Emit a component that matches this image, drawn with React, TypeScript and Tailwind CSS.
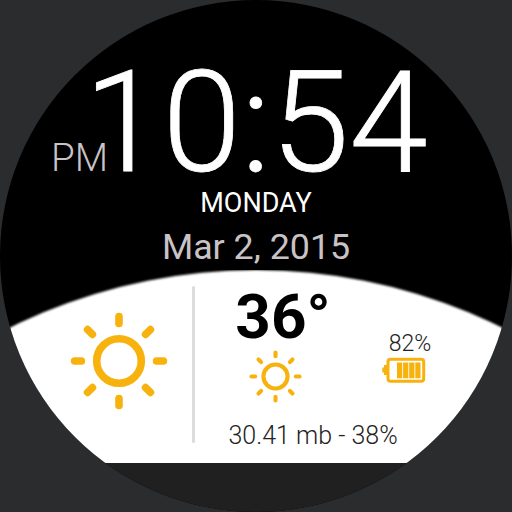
import type { ReactNode } from "react";

const watch = {
  time: "10:54",
  period: "PM",
  day: "MONDAY",
  date: "Mar 2, 2015",
  temperature: "36°",
  battery: "82%",
  conditions: "30.41 mb - 38%",
};

const RAYS = [0, 45, 90, 135, 180, 225, 270, 315];

function SunIcon({ className }: { className?: string }) {
  return (
    <svg
      className={className}
      viewBox="0 0 98 98"
      fill="none"
      stroke="#f7b20e"
      strokeWidth={7.6}
      strokeLinecap="round"
    >
      <circle cx="49" cy="49" r="22.3" />
      {RAYS.map((angle) => (
        <path
          key={angle}
          d="M49 4.6V11.4"
          transform={`rotate(${angle} 49 49)`}
        />
      ))}
    </svg>
  );
}

function BatteryIcon({ className }: { className?: string }) {
  return (
    <svg className={className} viewBox="0 0 44 26">
      <path d="M5 8H2V10.5H0.3V15.5H2V18H5Z" fill="#f7b20e" />
      <rect
        x="6"
        y="2.2"
        width="35.7"
        height="22"
        rx="2.5"
        fill="none"
        stroke="#f7b20e"
        strokeWidth={3}
      />
      {[15, 21.1, 27.2, 33.3].map((x) => (
        <rect key={x} x={x} y="5.5" width="5.2" height="15.8" fill="#f7b20e" />
      ))}
    </svg>
  );
}

function Line({ className, children }: { className: string; children: ReactNode }) {
  return <div className={`whitespace-nowrap ${className}`}>{children}</div>;
}

export default function App() {
  return (
    <div className="h-[512px] w-[512px] bg-[#2b2c2e] font-['Roboto',sans-serif]">
      <div className="flex h-full w-full flex-col overflow-hidden rounded-full bg-black">
        {/* TIME */}
        <div className="h-[270px] shrink-0 pt-[51px]">
          <div className="flex h-36 items-baseline pl-[51px] leading-[144px]">
            <Line className="w-[33px] text-[38.5px] font-light text-[#c9c3c5]">
              {watch.period}
            </Line>
            <Line className="text-[141.5px] font-light text-white [-webkit-text-stroke:0.8px_white]">
              {watch.time}
            </Line>
          </div>
          <Line className="mt-[-8px] text-center text-[27px] leading-8 text-white">
            {watch.day}
          </Line>
          <Line className="mt-2 text-center text-[35.8px] leading-10 text-[#c9c3c5]">
            {watch.date}
          </Line>
        </div>

        {/* WEATHER */}
        <div className="relative isolate flex h-[193px] shrink-0 overflow-hidden">
          <div className="absolute top-0 left-[-299px] -z-10 h-[1110px] w-[1110px] rounded-full bg-white blur-[0.8px]" />

          <div className="flex w-[192px] shrink-0 pt-[42px] pl-[70px]">
            <SunIcon className="h-[98px] w-[98px]" />
          </div>
          <div className="mt-4 h-[157px] w-[3px] shrink-0 rounded-full bg-[#dcdcdc]" />

          <div className="flex flex-1 flex-col">
            <div className="flex h-[142px]">
              <div className="flex w-[160px] flex-col items-center">
                <Line className="mt-4 pl-4 text-[62px] leading-[62px] font-bold text-black">
                  {watch.temperature}
                </Line>
                <SunIcon className="mt-0.5 h-[53px] w-[53px]" />
              </div>
              <div className="flex w-[110px] flex-col items-center pt-[60px]">
                <Line className="text-[23px] leading-7 font-light text-[#222]">
                  {watch.battery}
                </Line>
                <BatteryIcon className="mt-[-1px] mr-3 h-[26px] w-[44px]" />
              </div>
            </div>
            <Line className="mt-[10px] pl-[33.5px] text-[25px] leading-7 font-light text-[#222]">
              {watch.conditions}
            </Line>
          </div>
        </div>

        {/* CHIN */}
        <div className="flex-1 bg-[#202020]" />
      </div>
    </div>
  );
}
